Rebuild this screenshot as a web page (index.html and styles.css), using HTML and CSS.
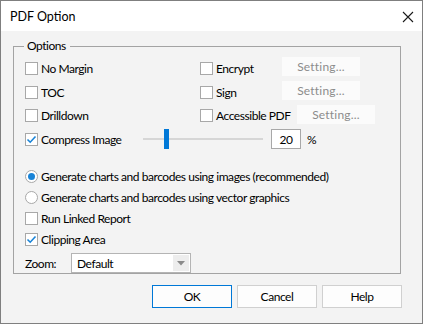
FILE: index.html
```html
<!DOCTYPE html>
<html lang="en">
<head>
    <meta charset="UTF-8">
    <title>PDF Option</title>
    <link rel="stylesheet" href="styles.css">
</head>
<body>
    <div class="window">
        <div class="titlebar">
            <span class="title">PDF Option</span>
            <svg class="close" width="12" height="12" viewBox="0 0 12 12">
                <path d="M1 1 L11 11 M11 1 L1 11" stroke="#1a1a1a" stroke-width="1.1" fill="none"/>
            </svg>
        </div>

        <div class="content">
            <fieldset class="group">
                <legend>Options</legend>

                <!-- top options, two columns -->
                <div class="row r1">
                    <label class="cell"><span class="box"></span>No Margin</label>
                    <label class="cell right"><span class="box"></span>Encrypt</label>
                    <span class="setting">Setting...</span>
                </div>
                <div class="row r2">
                    <label class="cell"><span class="box"></span>TOC</label>
                    <label class="cell right"><span class="box"></span>Sign</label>
                    <span class="setting">Setting...</span>
                </div>
                <div class="row r3">
                    <label class="cell"><span class="box"></span>Drilldown</label>
                    <label class="cell right wide"><span class="box"></span>Accessible PDF</label>
                    <span class="setting">Setting...</span>
                </div>
                <div class="row r4">
                    <label class="cell compress"><span class="box checked"><svg width="11" height="11" viewBox="0 0 11 11"><path d="M1.5 5.5 L4.2 8.2 L9.5 2.5" stroke="#1883d7" stroke-width="1.6" fill="none"/></svg></span>Compress Image</label>
                    <div class="slider">
                        <div class="track"></div>
                        <div class="thumb"></div>
                    </div>
                    <span class="num">20</span>
                    <span class="pct">%</span>
                </div>

                <!-- chart output -->
                <div class="row radio-row first">
                    <label class="cell"><span class="radio on"></span>Generate charts and barcodes using images (recommended)</label>
                </div>
                <div class="row radio-row">
                    <label class="cell"><span class="radio"></span>Generate charts and barcodes using vector graphics</label>
                </div>
                <div class="row r-small">
                    <label class="cell"><span class="box"></span>Run Linked Report</label>
                </div>
                <div class="row r-small">
                    <label class="cell"><span class="box checked"><svg width="11" height="11" viewBox="0 0 11 11"><path d="M1.5 5.5 L4.2 8.2 L9.5 2.5" stroke="#1883d7" stroke-width="1.6" fill="none"/></svg></span>Clipping Area</label>
                </div>
                <div class="row zoom-row">
                    <span class="zoom-label">Zoom:</span>
                    <div class="select">
                        <span class="select-text">Default</span>
                        <span class="arrow"><svg width="8" height="5" viewBox="0 0 8 5"><path d="M0 0 L8 0 L4 4.5 Z" fill="#8a8a8a"/></svg></span>
                    </div>
                </div>
            </fieldset>

            <div class="buttons">
                <span class="btn default">OK</span>
                <span class="btn">Cancel</span>
                <span class="btn">Help</span>
            </div>
        </div>
    </div>
</body>
</html>
```

FILE: styles.css
```css
body {
    margin: 0;
    font-family: Lato, "Liberation Sans", sans-serif;
    font-size: 12px;
    letter-spacing: -0.45px;
    color: #000;
}
.window {
    width: 423px;
    height: 324px;
    box-sizing: border-box;
    border: 1px solid #7f7f7f;
    background-color: #f3f3f3;
    display: flex;
    flex-direction: column;
}
.titlebar {
    height: 30px;
    background-color: #fff;
    display: flex;
    align-items: center;
    justify-content: space-between;
    padding: 0 8px 0 9px;
}
.title {
    font-size: 12.5px;
    letter-spacing: 0;
}
.close {
    margin-top: 2px;
}
.content {
    padding: 0 21px 0 12px;
}
.group {
    margin: 7px 0 0 0;
    padding: 0 0 6px 11px;
    border: 1px solid #a3a3a3;
    height: 236px;
    box-sizing: border-box;
}
.group legend {
    padding: 0 4px 0 3px;
    margin-left: -1px;
    line-height: 16px;
}
.row {
    display: flex;
    align-items: center;
}
.r1 { height: 24px; margin-top: 2px; }
.r2 { height: 24px; }
.r3 { height: 23px; }
.r4 { height: 24px; }
.radio-row { height: 21px; }
.radio-row.first { margin-top: 14px; height: 22px; }
.r-small { height: 21px; }
.cell {
    display: flex;
    align-items: center;
    width: 175px;
    flex-shrink: 0;
    white-space: nowrap;
}
.cell.right {
    width: 82px;
}
.cell.right.wide {
    width: 97px;
}
.radio-row .cell,
.r-small .cell {
    width: auto;
}
.box {
    width: 11px;
    height: 11px;
    flex-shrink: 0;
    border: 1px solid #a8a8a8;
    background-color: #fff;
    margin-right: 3px;
    display: flex;
    align-items: center;
    justify-content: center;
}
.radio {
    width: 11px;
    height: 11px;
    flex-shrink: 0;
    border: 1px solid #a8a8a8;
    border-radius: 50%;
    background-color: #fff;
    margin-right: 3px;
    position: relative;
}
.radio.on::after {
    content: "";
    position: absolute;
    left: 2px;
    top: 2px;
    width: 7px;
    height: 7px;
    border-radius: 50%;
    background-color: #1883d7;
}
.setting {
    height: 19px;
    width: 78px;
    flex-shrink: 0;
    background-color: #fbfbfb;
    color: #8c8c8c;
    letter-spacing: 0.2px;
    display: flex;
    align-items: center;
    justify-content: center;
    margin-top: -3px;
}
.compress {
    width: 118px;
}
.slider {
    width: 120px;
    height: 20px;
    position: relative;
}
.track {
    position: absolute;
    left: 0;
    right: 0;
    top: 9px;
    height: 2px;
    background-color: #d6d6d6;
}
.thumb {
    position: absolute;
    left: 21px;
    top: 0;
    width: 5px;
    height: 20px;
    background-color: #0078d7;
}
.num {
    margin-left: 8px;
    width: 28px;
    height: 18px;
    border: 1px solid #a8a8a8;
    background-color: #fff;
    display: flex;
    align-items: center;
    justify-content: center;
}
.pct {
    margin-left: 6px;
}
.zoom-row {
    margin-top: 3px;
    height: 20px;
}
.zoom-label {
    width: 46px;
}
.select {
    width: 118px;
    height: 18px;
    border: 1px solid #b4b4b4;
    background-color: #fff;
    display: flex;
    align-items: center;
    justify-content: space-between;
}
.select-text {
    padding-left: 5px;
}
.arrow {
    width: 16px;
    height: 16px;
    margin-right: 1px;
    background-color: #ededed;
    display: flex;
    align-items: center;
    justify-content: center;
}
.buttons {
    display: flex;
    justify-content: flex-end;
    gap: 5px;
    margin-top: 11px;
    margin-right: -1px;
}
.btn {
    width: 78px;
    height: 21px;
    border: 1px solid #d0d0d0;
    background-color: #fdfdfd;
    display: flex;
    align-items: center;
    justify-content: center;
}
.btn.default {
    border-color: #0078d7;
}
```
